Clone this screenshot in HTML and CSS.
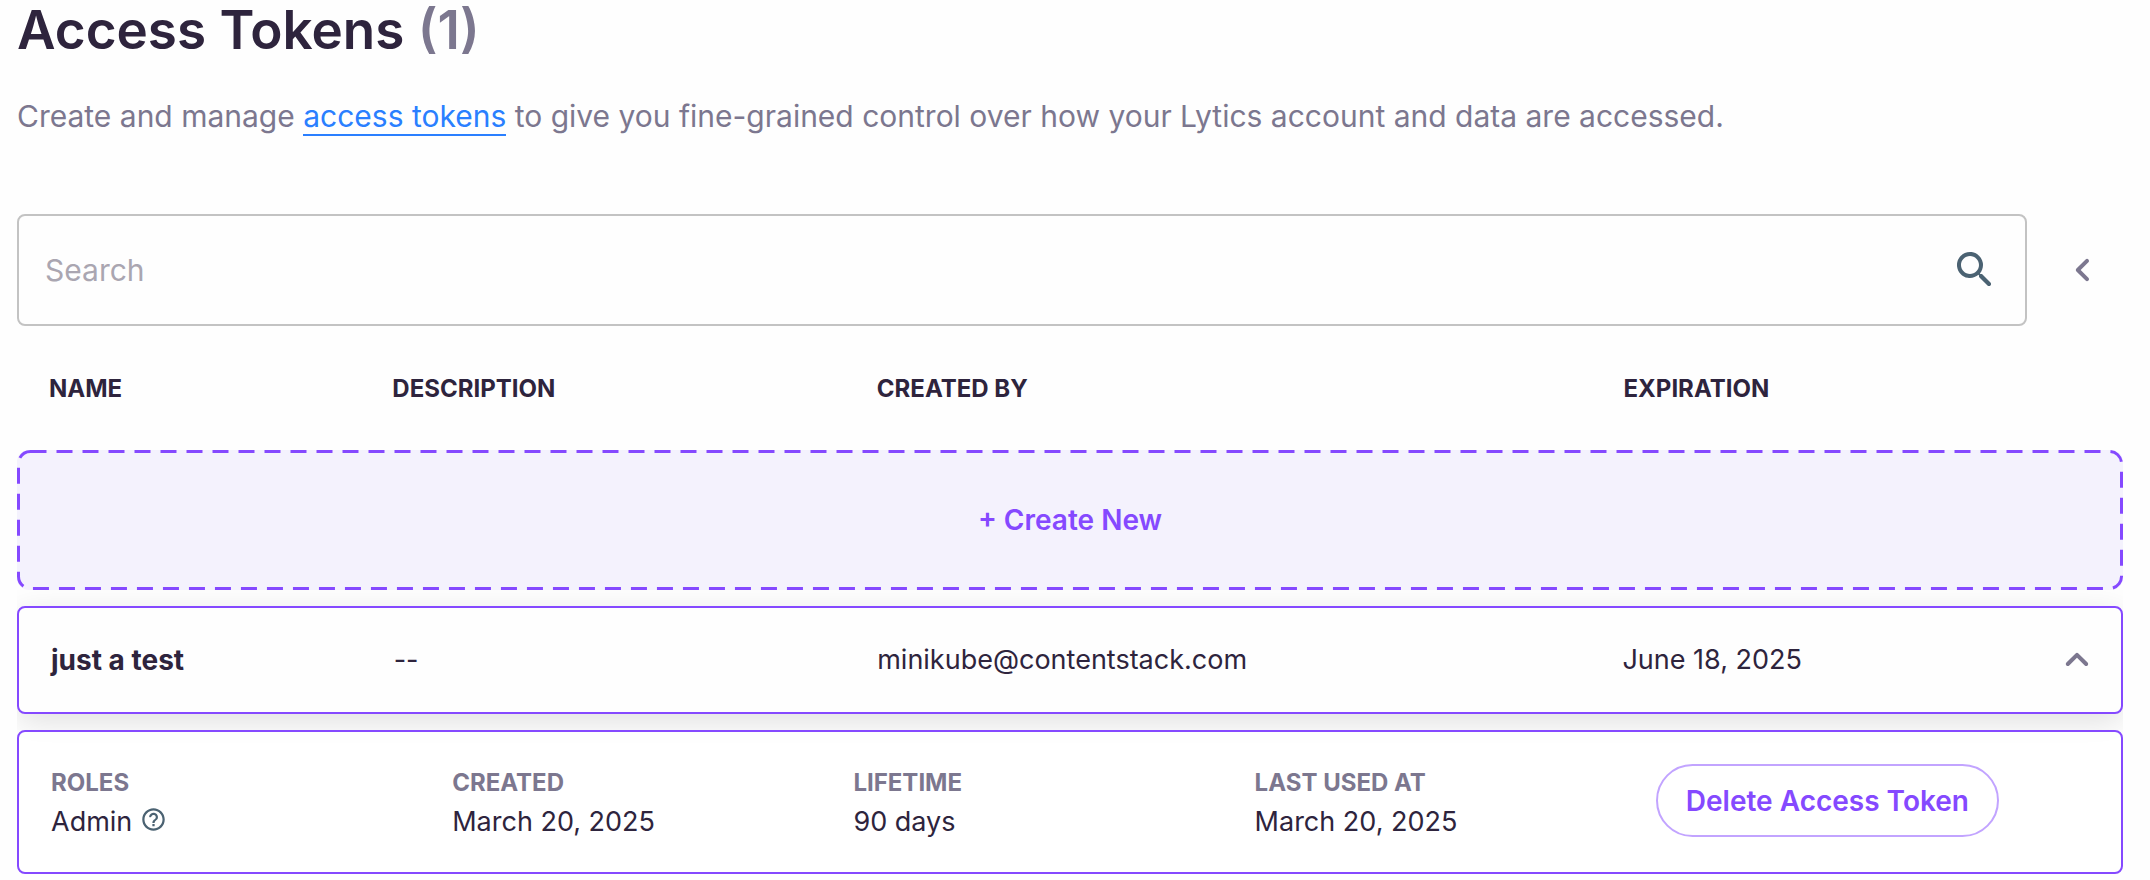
FILE: index.html
```
<!DOCTYPE html>
<html lang="en">
<head>
    <meta charset="UTF-8">
    <meta name="viewport" content="width=device-width, initial-scale=1.0">
    <title>Access Tokens</title>
    <link rel="stylesheet" href="styles.css">
</head>
<body>

    <main class="page">
        <h1 class="title">Access Tokens <span class="count">(1)</span></h1>
        <p class="intro">Create and manage <a href="#">access tokens</a> to give you fine-grained control over how your Lytics account and data are accessed.</p>

        <div class="toolbar">
            <div class="search">
                <input type="text" placeholder="Search" aria-label="Search">
                <svg class="icon search-icon" viewBox="0 0 24 24"><path d="M15.5 14h-.79l-.28-.27c1.2-1.4 1.82-3.31 1.48-5.34-.47-2.78-2.79-5-5.59-5.34-4.23-.52-7.79 3.04-7.27 7.27.34 2.8 2.56 5.12 5.34 5.59 2.03.34 3.94-.28 5.34-1.48l.27.28v.79l4.25 4.25c.41.41 1.08.41 1.49 0 .41-.41.41-1.08 0-1.49L15.5 14zm-6 0C7.01 14 5 11.99 5 9.5S7.01 5 9.5 5 14 7.01 14 9.5 11.99 14 9.5 14z"/></svg>
            </div>
            <button class="icon-btn" type="button" aria-label="Filters">
                <svg class="icon" viewBox="0 0 24 24"><path d="M14.71 6.71c-.39-.39-1.02-.39-1.41 0L8.71 11.3c-.39.39-.39 1.02 0 1.41l4.59 4.59c.39.39 1.02.39 1.41 0 .39-.39.39-1.02 0-1.41L10.83 12l3.88-3.88c.39-.39.38-1.03 0-1.41z"/></svg>
            </button>
        </div>

        <table class="tokens">
            <thead>
                <tr class="row head">
                    <th>NAME</th>
                    <th>DESCRIPTION</th>
                    <th>CREATED BY</th>
                    <th>EXPIRATION</th>
                </tr>
            </thead>
            <tbody>
                <tr class="create-row">
                    <td colspan="4">
                        <button class="create-btn" type="button">
                            <svg class="dashes"><rect rx="12"/></svg>
                            + Create New
                        </button>
                    </td>
                </tr>
                <tr class="row token">
                    <td class="name">just a test</td>
                    <td>--</td>
                    <td>minikube@contentstack.com</td>
                    <td class="last">
                        June 18, 2025
                        <button class="icon-btn" type="button" aria-label="Collapse">
                            <svg class="icon" viewBox="0 0 24 24"><path d="M11.29 8.71 6.7 13.3c-.39.39-.39 1.02 0 1.41.39.39 1.02.39 1.41 0L12 10.83l3.88 3.88c.39.39 1.02.39 1.41 0 .39-.39.39-1.02 0-1.41L12.7 8.71c-.38-.39-1.02-.39-1.41 0z"/></svg>
                        </button>
                    </td>
                </tr>
                <tr class="details-row">
                    <td colspan="4">
                        <dl class="details">
                            <div>
                                <dt>ROLES</dt>
                                <dd>Admin <svg class="help" viewBox="0 0 24 24"><path d="M12 2C6.48 2 2 6.48 2 12s4.48 10 10 10 10-4.48 10-10S17.52 2 12 2zm0 18c-4.41 0-8-3.59-8-8s3.59-8 8-8 8 3.59 8 8-3.59 8-8 8zm-1-4h2v2h-2zm1.61-9.96c-2.06-.3-3.88.97-4.43 2.79-.18.58.26 1.17.87 1.17h.2c.41 0 .74-.29.88-.67.32-.89 1.27-1.5 2.3-1.28.95.2 1.65 1.13 1.57 2.1-.1 1.34-1.62 1.63-2.45 2.88 0 .01-.01.01-.01.02-.01.02-.02.03-.03.05-.09.15-.18.32-.25.5-.01.03-.03.05-.04.08-.01.02-.01.04-.02.07-.12.34-.2.75-.2 1.25h2c0-.42.11-.77.28-1.07.02-.03.03-.06.05-.09.08-.14.18-.27.28-.39.01-.01.02-.03.03-.04.1-.12.21-.23.33-.34.96-.91 2.26-1.65 1.99-3.56-.24-1.74-1.61-3.21-3.35-3.47z"/></svg></dd>
                            </div>
                            <div>
                                <dt>CREATED</dt>
                                <dd>March 20, 2025</dd>
                            </div>
                            <div>
                                <dt>LIFETIME</dt>
                                <dd>90 days</dd>
                            </div>
                            <div>
                                <dt>LAST USED AT</dt>
                                <dd>March 20, 2025</dd>
                            </div>
                            <div>
                                <button class="delete-btn" type="button">Delete Access Token</button>
                            </div>
                        </dl>
                    </td>
                </tr>
            </tbody>
        </table>
    </main>

</body>
</html>
```
FILE: styles.css
```
* {
    box-sizing: border-box;
}

body {
    font-family: Inter, sans-serif;
    font-size: 27px;
    line-height: 40px;
    color: #2e243d;
    background: #fefefe;
    margin: 0;
}

button,
input {
    font-family: inherit;
}

.page {
    padding: 0 27px 0 17px;
}

.title {
    font-size: 53px;
    line-height: 60px;
    font-weight: 600;
    margin: 0;
}

.count {
    color: #7c778f;
}

.intro {
    font-size: 30px;
    line-height: 48px;
    color: #7c778f;
    margin: 32px 0 74px;
}

.intro a {
    color: #2a7fff;
    text-decoration: none;
    border-bottom: 2px solid #2a7fff;
}

.toolbar {
    display: flex;
    align-items: center;
    gap: 32px;
}

.search {
    flex: 1;
    display: flex;
    align-items: center;
    height: 112px;
    padding: 0 26px;
    border: 2px solid #c3c3c3;
    border-radius: 8px;
}

.search input {
    flex: 1;
    border: 0;
    outline: 0;
    padding: 0;
    font-size: 30px;
    color: #2e243d;
    background: transparent;
}

.search input::placeholder {
    color: #aaa6b1;
}

.icon {
    display: block;
    width: 48px;
    height: 48px;
    fill: #7c778f;
}

.search-icon {
    fill: #4b6272;
}

.icon-btn {
    padding: 0;
    border: 0;
    background: none;
    cursor: pointer;
}

.toolbar .icon-btn {
    margin-right: 16px;
}

.tokens,
.tokens thead,
.tokens tbody,
.create-row,
.create-row td,
.details-row,
.details-row td {
    display: block;
}

/* keeps the row shadow inside the list */
.tokens {
    overflow: hidden;
}

.tokens th,
.tokens td {
    padding: 0;
    text-align: left;
}

.row {
    display: grid;
    grid-template-columns: 343fr 484fr 746fr 467fr;
    align-items: center;
    padding: 0 32px;
}

.head {
    padding: 43px 32px 41px;
    font-size: 24px;
}

.create-btn {
    position: relative;
    z-index: 1;
    display: block;
    width: 100%;
    height: 140px;
    font-size: 28px;
    font-weight: 600;
    color: #8549ff;
    background: #f4f2fd;
    border: 0;
    border-radius: 12px;
    cursor: pointer;
}

.dashes {
    position: absolute;
    top: 0;
    left: 0;
    width: 100%;
    height: 100%;
    fill: none;
    stroke: #8549ff;
    stroke-width: 3px;
    stroke-dasharray: 16 10;
    overflow: visible;
}

/* half the stroke inside each edge */
.dashes rect {
    x: 1.5px;
    y: 1.5px;
    width: calc(100% - 3px);
    height: calc(100% - 3px);
}

.token {
    height: 108px;
    margin: 16px 0;
    background: #fefefe;
    border: 2px solid #8549ff;
    border-radius: 8px;
    box-shadow: 0 8px 32px rgba(0, 0, 0, 0.12);
}

.name {
    font-size: 28px;
    font-weight: 700;
}

.last {
    display: flex;
    align-items: center;
    justify-content: space-between;
}

.last .icon-btn {
    margin-right: -12px;
}

.details {
    display: grid;
    grid-template-columns: repeat(5, 1fr);
    margin: 0;
    padding: 32px 64px 30px 32px;
    background: rgba(255, 255, 255, 0.8);
    border: 2px solid #8549ff;
    border-radius: 8px;
}

.details dt {
    font-size: 24px;
    line-height: 38px;
    font-weight: 700;
    color: #7c778f;
}

.details dd {
    margin: 0;
}

.help {
    width: 27px;
    height: 27px;
    fill: #4b6272;
    vertical-align: -2px;
}

.delete-btn {
    display: block;
    height: 73px;
    padding: 0 28px;
    font-size: 28px;
    font-weight: 600;
    white-space: nowrap;
    color: #8549ff;
    background: none;
    border: 2px solid #c2a4ff;
    border-radius: 40px;
    cursor: pointer;
}
```
